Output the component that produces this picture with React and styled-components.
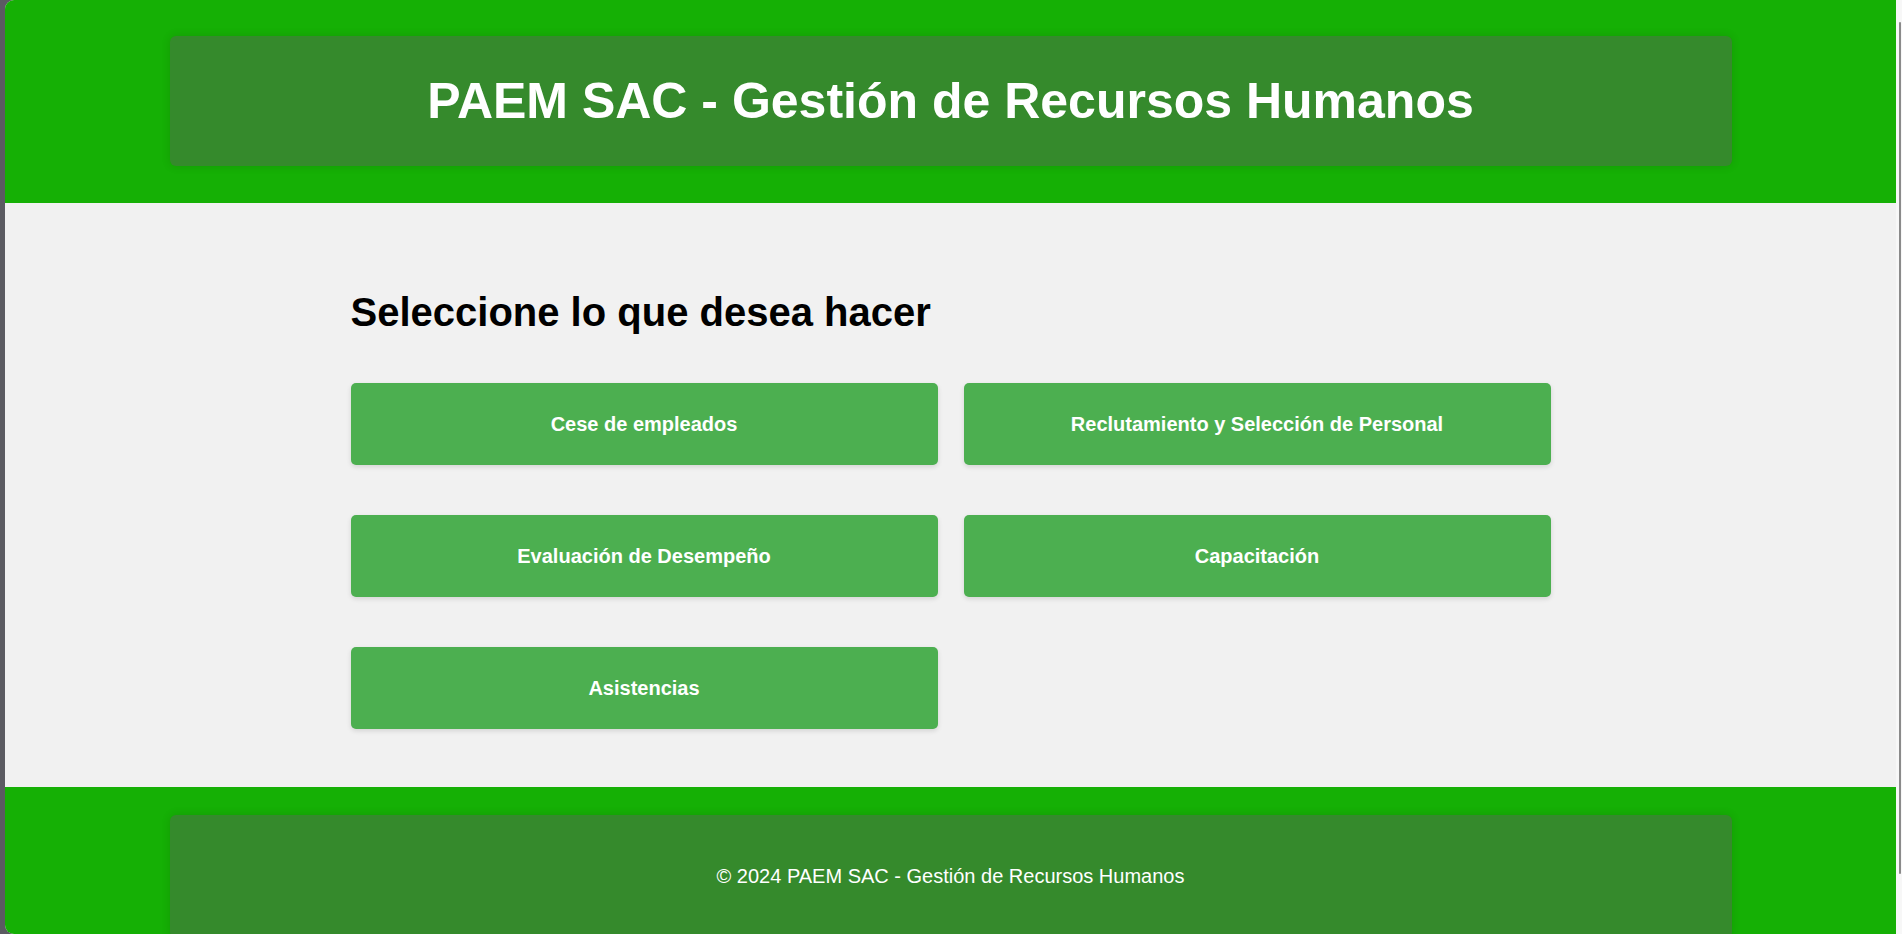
import React from "react";
import styled, { createGlobalStyle } from "styled-components";

const GlobalStyle = createGlobalStyle`
  html, body {
    margin: 0;
    padding: 0;
    height: 100%;
    overflow: hidden;
    background: #5b5b62;
    font-family: "Liberation Sans", Arial, sans-serif;
  }
`;

const Frame = styled.div`
  display: flex;
  height: 934px;
  width: 1902px;
  padding-left: 5px;
  box-sizing: border-box;
`;

const Page = styled.div`
  flex: 1;
  display: flex;
  flex-direction: column;
  border-radius: 9px 0 0 9px;
  overflow: hidden;
  background: #f1f1f1;
`;

const ScrollTrack = styled.div`
  width: 6px;
  background: #f7f7f7;
  display: flex;
  justify-content: flex-end;
  padding: 22px 0 60px;
  box-sizing: border-box;
`;

const ScrollThumb = styled.div`
  width: 2px;
  margin-right: 1px;
  background: #8a8a8a;
  border-radius: 1px;
`;

const Band = styled.div`
  background: #15b005;
  padding: ${(p) => p.$pad};
  height: ${(p) => p.$height};
  box-sizing: border-box;
  flex-shrink: 0;
  overflow: hidden;
`;

const Panel = styled.div`
  width: 1562px;
  margin: 0 auto;
  background: #358a2c;
  border-radius: 6px;
  box-shadow: 0 0 10px rgba(0, 0, 0, 0.12);
  color: #fff;
  display: flex;
  justify-content: center;
  align-items: ${(p) => (p.$top ? "flex-start" : "center")};
  height: ${(p) => p.$height || "auto"};
  padding: ${(p) => p.$pad || "0"};
  box-sizing: border-box;
`;

const Title = styled.h1`
  margin: 0;
  font-size: 50px;
  font-weight: bold;
`;

const FooterText = styled.p`
  margin: 20px 0;
  font-size: 20px;
`;

const Main = styled.main`
  flex: 1;
  padding-top: 87px;
`;

const Container = styled.div`
  width: 1200px;
  margin: 0 auto;
`;

const Heading = styled.h2`
  margin: 0 0 48px 0;
  font-size: 40px;
  font-weight: bold;
  color: #000;
`;

const Options = styled.div`
  display: grid;
  grid-template-columns: repeat(2, 587px);
  grid-auto-rows: 82px;
  column-gap: 26px;
  row-gap: 50px;
`;

const OptionButton = styled.button`
  background: #4caf50;
  color: #fff;
  border: none;
  border-radius: 5px;
  box-shadow: 0 2px 5px rgba(0, 0, 0, 0.12);
  font-family: "Liberation Sans", Arial, sans-serif;
  font-size: 20px;
  font-weight: bold;
  cursor: pointer;
  display: flex;
  align-items: center;
  justify-content: center;
  padding: 0;
`;

const options = [
  "Cese de empleados",
  "Reclutamiento y Selección de Personal",
  "Evaluación de Desempeño",
  "Capacitación",
  "Asistencias",
];

export default function App() {
  return (
    <>
      <GlobalStyle />
      <Frame>
        <Page>
          <Band $pad="36px 0 37px" $height="203px">
            <Panel $height="130px">
              <Title>PAEM SAC - Gestión de Recursos Humanos</Title>
            </Panel>
          </Band>

          <Main>
            <Container>
              <Heading>Seleccione lo que desea hacer</Heading>
              <Options>
                {options.map((label) => (
                  <OptionButton key={label}>{label}</OptionButton>
                ))}
              </Options>
            </Container>
          </Main>

          <Band $pad="28px 0 0" $height="147px">
            <Panel $pad="30px 0" $top>
              <FooterText>© 2024 PAEM SAC - Gestión de Recursos Humanos</FooterText>
            </Panel>
          </Band>
        </Page>
        <ScrollTrack>
          <ScrollThumb />
        </ScrollTrack>
      </Frame>
    </>
  );
}
